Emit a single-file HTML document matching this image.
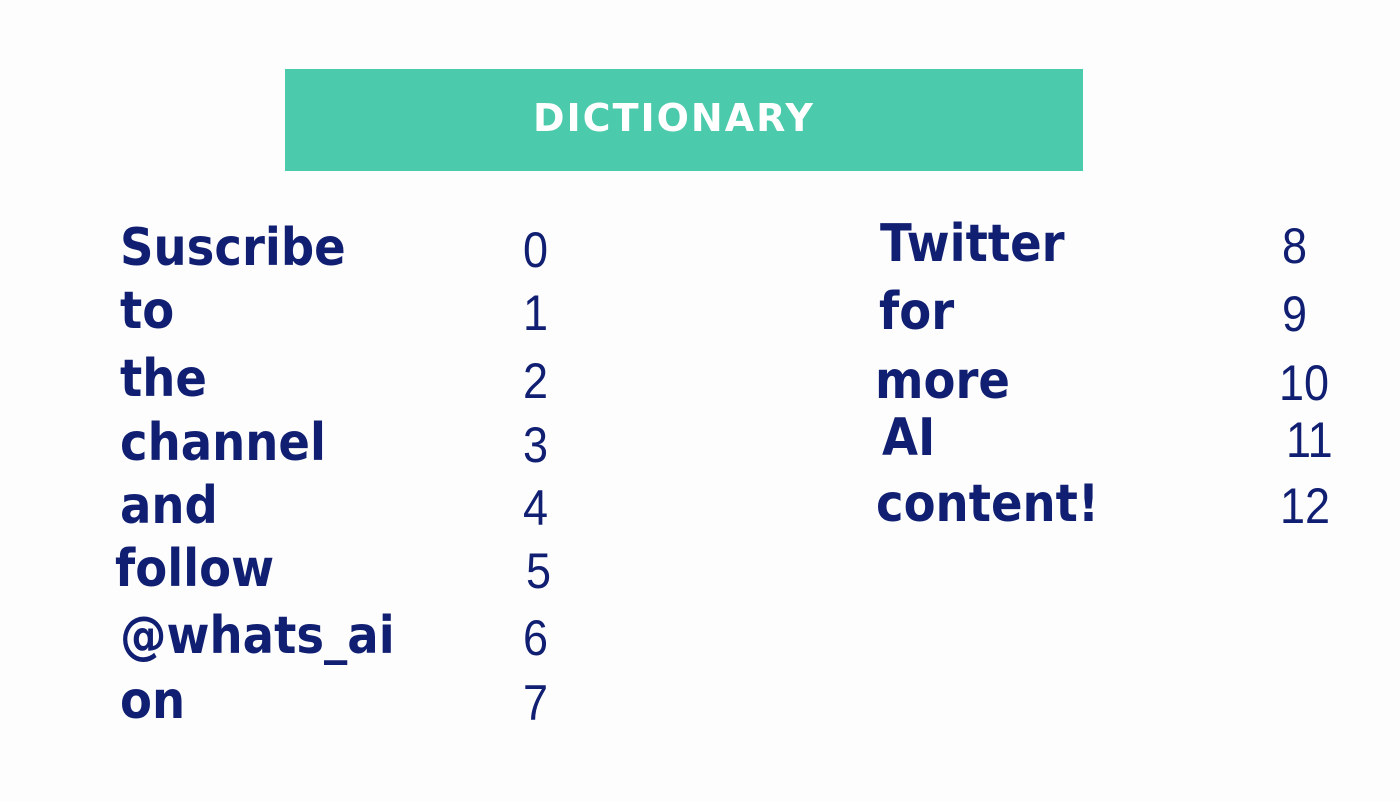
<!DOCTYPE html>
<html><head><meta charset="utf-8"><style>
html,body{margin:0;padding:0;background:#fdfdfd;width:1400px;height:802px;overflow:hidden;position:relative}
.box{position:absolute;left:285px;top:69px;width:798px;height:102px;background:#4bcaac}
.t{position:absolute;left:533px;top:99px;font:bold 38px/1 "DejaVu Sans",sans-serif;color:#fff;letter-spacing:2px;white-space:nowrap}
.w{position:absolute;font:bold 52px/1 "DejaVu Sans",sans-serif;color:#101f72;transform:scaleX(0.895);transform-origin:left top;white-space:nowrap}
.n{position:absolute;font:50px/1 "Liberation Sans",sans-serif;color:#101f72;white-space:nowrap;transform:scaleX(0.9);transform-origin:left top}
</style></head><body>
<div class="box"></div>
<div class="t">DICTIONARY</div>
<div class="w" style="left:120px;top:222px">Suscribe</div>
<div class="w" style="left:120px;top:285px">to</div>
<div class="w" style="left:120px;top:353px">the</div>
<div class="w" style="left:120px;top:417px">channel</div>
<div class="w" style="left:120px;top:480px">and</div>
<div class="w" style="left:115px;top:543px">follow</div>
<div class="w" style="left:120px;top:610px">@whats_ai</div>
<div class="w" style="left:120px;top:675px">on</div>
<div class="n" style="left:523px;top:225px">0</div>
<div class="n" style="left:523px;top:288px">1</div>
<div class="n" style="left:523px;top:356px">2</div>
<div class="n" style="left:523px;top:420px">3</div>
<div class="n" style="left:523px;top:483px">4</div>
<div class="n" style="left:526px;top:546px">5</div>
<div class="n" style="left:523px;top:613px">6</div>
<div class="n" style="left:523px;top:678px">7</div>
<div class="w" style="left:880px;top:218px">Twitter</div>
<div class="w" style="left:879px;top:286px">for</div>
<div class="w" style="left:875px;top:355px">more</div>
<div class="w" style="left:882px;top:412px">AI</div>
<div class="w" style="left:876px;top:478px">content!</div>
<div class="n" style="left:1282px;top:221px">8</div>
<div class="n" style="left:1282px;top:289px">9</div>
<div class="n" style="left:1279px;top:358px">10</div>
<div class="n" style="left:1286px;top:415px">11</div>
<div class="n" style="left:1280px;top:481px">12</div>
</body></html>
